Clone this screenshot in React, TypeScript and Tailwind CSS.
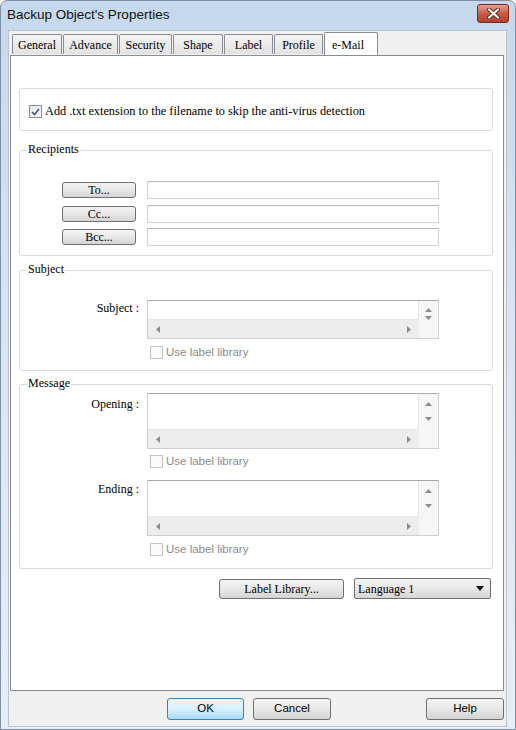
import React from "react";

const SERIF = "font-['Liberation_Serif','Times_New_Roman',serif]";
const SANS = "font-['Liberation_Sans',Arial,sans-serif]";

const tabs = [
  { label: "General", w: "w-[50px]" },
  { label: "Advance", w: "w-[55px]" },
  { label: "Security", w: "w-[53px]" },
  { label: "Shape", w: "w-[50px]" },
  { label: "Label", w: "w-[49px]" },
  { label: "Profile", w: "w-[49px]" },
];

function CloseGlyph() {
  return (
    <svg width="13" height="11" viewBox="0 0 13 11">
      <path d="M2 1.5 L11 9.5 M11 1.5 L2 9.5" stroke="#6d2318" strokeWidth="4" strokeLinecap="round" />
      <path d="M2 1.5 L11 9.5 M11 1.5 L2 9.5" stroke="#ffffff" strokeWidth="2.2" strokeLinecap="round" />
    </svg>
  );
}

function UpArrow() {
  return (
    <svg width="7" height="4" viewBox="0 0 7 4">
      <path d="M0 4 L3.5 0 L7 4Z" fill="#8c8c8c" />
    </svg>
  );
}
function DownArrow() {
  return (
    <svg width="7" height="4" viewBox="0 0 7 4">
      <path d="M0 0 L3.5 4 L7 0Z" fill="#8c8c8c" />
    </svg>
  );
}
function LeftArrow() {
  return (
    <svg width="4" height="7" viewBox="0 0 4 7">
      <path d="M4 0 L0 3.5 L4 7Z" fill="#8c8c8c" />
    </svg>
  );
}
function RightArrow() {
  return (
    <svg width="4" height="7" viewBox="0 0 4 7">
      <path d="M0 0 L4 3.5 L0 7Z" fill="#8c8c8c" />
    </svg>
  );
}

function ScrollBox({ tall }: { tall?: boolean }) {
  return (
    <div
      className={`w-[292px] ${tall ? "h-[56px]" : "h-[39px]"} border border-[#cfcfcf] border-t-[#a9a9a9] grid grid-cols-[1fr_19px] grid-rows-[1fr_18px] bg-[#f3f3f3]`}
    >
      <div className="bg-white border-r border-b border-[#e6e6e6]" />
      <div
        className={`bg-[#f6f6f6] flex flex-col items-center ${tall ? "justify-between pt-[8px] pb-[9px]" : "pt-[7px] gap-[4px]"}`}
      >
        <UpArrow />
        <DownArrow />
      </div>
      <div className="bg-[#ededed] flex items-center justify-between px-[8px]">
        <LeftArrow />
        <RightArrow />
      </div>
      <div className="bg-[#f6f6f6]" />
    </div>
  );
}

function LabelLibCheck() {
  return (
    <div className="flex items-center h-[13px] ml-[3px] mt-[7px]">
      <div className="w-[13px] h-[13px] border border-[#c4c4c4] bg-[#fbfbfb]" />
      <span className={`${SANS} text-[11.5px] text-[#8a8a8a] ml-[3px] leading-none`}>Use label library</span>
    </div>
  );
}

function WinButton({ children, w, h }: { children: React.ReactNode; w: string; h: string }) {
  return (
    <div
      className={`${w} ${h} ${SERIF} text-[12px] text-black flex items-center justify-center rounded-[3px] border border-[#707070] bg-gradient-to-b from-[#f4f4f4] via-[#e8e8e8] to-[#d3d3d3] leading-none`}
    >
      {children}
    </div>
  );
}

function Group({ title, className, children }: { title?: string; className: string; children: React.ReactNode }) {
  return (
    <div className={`relative w-[474px] border border-[#d5dbe0] rounded-[3px] ${className}`}>
      {title && (
        <span className={`absolute top-[-9px] left-[7px] bg-white px-[1px] ${SERIF} text-[12px] leading-[14px] text-black`}>
          {title}
        </span>
      )}
      {children}
    </div>
  );
}

function AddressRow({ label, className }: { label: string; className?: string }) {
  return (
    <div className={`flex items-center h-[18px] ${className ?? ""}`}>
      <WinButton w="w-[74px]" h="h-[16px]">{label}</WinButton>
      <div className="ml-[11px] w-[292px] h-[18px] border border-[#d2d2d2] border-t-[#b3b3b3] bg-white" />
    </div>
  );
}

function FieldLabel({ children, pad }: { children: React.ReactNode; pad: string }) {
  return (
    <div className={`w-[119px] text-right ${SERIF} text-[12px] leading-[14px] text-black ${pad}`}>{children}</div>
  );
}

export default function App() {
  return (
    <div className="w-[516px] h-[730px] flex flex-col border border-[#7d90a6] rounded-t-[7px] bg-gradient-to-b from-[#c6d8ec] via-[#dbe6f2] to-[#e7eef5] overflow-hidden">
      {/* title bar */}
      <div className="h-[29px] flex items-center pl-[6px]">
        <span className={`${SANS} text-[13.5px] text-[#111]`}>Backup Object's Properties</span>
        <div className="ml-auto mr-[6px] mt-[-4px] w-[32px] h-[19px] rounded-[3px] border border-[#6e2b23] bg-gradient-to-b from-[#e3a293] via-[#c95a4a] to-[#b4402f] flex items-center justify-center">
          <CloseGlyph />
        </div>
      </div>

      {/* client area */}
      <div className="flex-1 ml-[7px] mr-[8px] mb-[2px] bg-[#f0f0f0] border border-[#b9c4cf] flex flex-col px-[1px] pr-[2px]">
        {/* tab strip */}
        <div className="h-[22px] flex items-end pl-[2px] gap-[1px] mt-[2px] relative z-10">
          {tabs.map((t) => (
            <div
              key={t.label}
              className={`${t.w} h-[20px] mb-[1px] border border-b-0 border-[#898c95] rounded-t-[2px] bg-gradient-to-b from-[#f4f4f4] to-[#e2e2e2] flex items-center justify-center ${SERIF} text-[12px] text-black`}
            >
              {t.label}
            </div>
          ))}
          <div
            className={`w-[54px] h-[23px] border border-b-0 border-[#898c95] rounded-t-[2px] bg-white flex items-start pt-[3px] pl-[7px] ${SERIF} text-[12px] text-black`}
          >
            e-Mail
          </div>
        </div>

        {/* tab page */}
        <div className="flex-1 border border-[#898c95] bg-white pl-[8px] pt-[32px] flex flex-col">
          <Group className="h-[43px] pt-[16px] pl-[9px]">
            <div className="flex items-center h-[13px]">
              <div className="w-[13px] h-[13px] border border-[#8e8f8f] bg-gradient-to-br from-[#e4e6ea] to-[#f7f8fa] flex items-center justify-center">
                <svg width="9" height="8" viewBox="0 0 9 8">
                  <path d="M1 4 L3.5 6.5 L8 1" stroke="#3f5576" strokeWidth="1.6" fill="none" />
                </svg>
              </div>
              <span className={`${SERIF} text-[12.3px] text-black ml-[3px] leading-none`}>
                Add .txt extension to the filename to skip the anti-virus detection
              </span>
            </div>
          </Group>

          <Group title="Recipients" className="mt-[19px] pt-[30px] pb-[9px] pl-[42px]">
            <AddressRow label="To..." />
            <AddressRow label="Cc..." className="mt-[6px]" />
            <AddressRow label="Bcc..." className="mt-[5px]" />
          </Group>

          <Group title="Subject" className="mt-[14px] pt-[29px] pb-[11px]">
            <div className="flex gap-[8px]">
              <FieldLabel pad="pt-[1px]">Subject :</FieldLabel>
              <div className="flex flex-col">
                <ScrollBox />
                <LabelLibCheck />
              </div>
            </div>
          </Group>

          <Group title="Message" className="mt-[13px] pt-[8px] pb-[12px]">
            <div className="flex gap-[8px]">
              <FieldLabel pad="pt-[4px]">Opening :</FieldLabel>
              <div className="flex flex-col">
                <ScrollBox tall />
                <div className="-mt-[1px]">
                  <LabelLibCheck />
                </div>
              </div>
            </div>
            <div className="flex gap-[8px] mt-[12px]">
              <FieldLabel pad="pt-[2px]">Ending :</FieldLabel>
              <div className="flex flex-col">
                <ScrollBox tall />
                <LabelLibCheck />
              </div>
            </div>
          </Group>

          <div className="w-[474px] flex items-center justify-end pr-[2px] mt-[9px] gap-[10px]">
            <WinButton w="w-[125px]" h="h-[20px]">Label Library...</WinButton>
            <div
              className={`w-[137px] h-[21px] rounded-[2px] border border-[#707070] bg-gradient-to-b from-[#f4f4f4] via-[#e8e8e8] to-[#d6d6d6] flex items-center pl-[3px] pr-[6px] ${SERIF} text-[12px] text-black`}
            >
              <span>Language 1</span>
              <svg className="ml-auto" width="8" height="5" viewBox="0 0 8 5">
                <path d="M0 0 L8 0 L4 5Z" fill="#111" />
              </svg>
            </div>
          </div>
        </div>

        {/* dialog buttons */}
        <div className={`h-[35px] flex items-center ${SANS} text-[11.5px] text-black`}>
          <div className="ml-[157px] w-[77px] h-[22px] rounded-[3px] border border-[#3c7fb1] bg-gradient-to-b from-[#eaf6fd] via-[#d9f0fc] to-[#a7d9f5] flex items-center justify-center">
            OK
          </div>
          <div className="ml-[9px] w-[78px] h-[22px] rounded-[3px] border border-[#707070] bg-gradient-to-b from-[#f4f4f4] via-[#e8e8e8] to-[#d3d3d3] flex items-center justify-center">
            Cancel
          </div>
          <div className="ml-auto w-[78px] h-[22px] rounded-[3px] border border-[#707070] bg-gradient-to-b from-[#f4f4f4] via-[#e8e8e8] to-[#d3d3d3] flex items-center justify-center">
            Help
          </div>
        </div>
      </div>
    </div>
  );
}
